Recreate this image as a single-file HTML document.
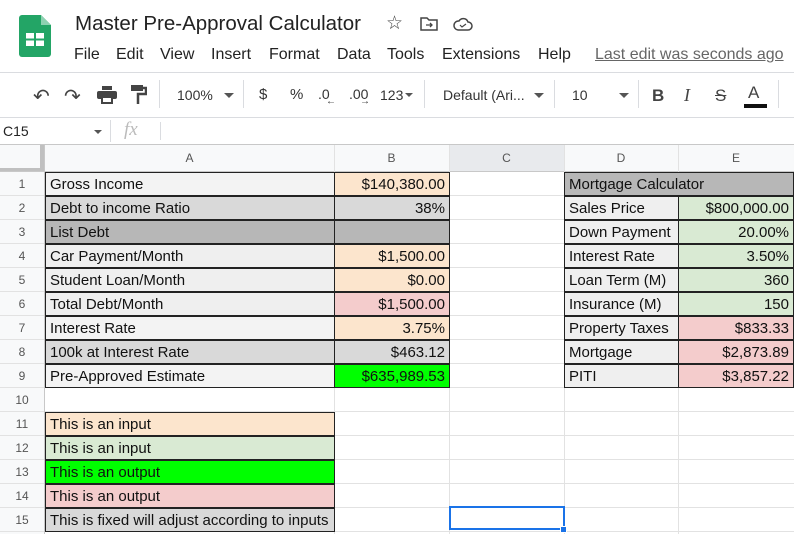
<!DOCTYPE html>
<html><head><meta charset="utf-8"><style>
*{margin:0;padding:0;box-sizing:border-box}
body{width:794px;height:534px;overflow:hidden;background:#fff;font-family:"Liberation Sans",Arial,sans-serif;position:relative;color:#202124}
.a{position:absolute}
.t{font-size:15px;white-space:nowrap}
.m{position:absolute;top:46px;font-size:16px;color:#222;white-space:nowrap}
.c{position:absolute;height:24px;font-size:15px;line-height:23px;padding:0 4px;white-space:nowrap;color:#111}
.r{text-align:right}
.bd{border:1px solid #222}
.hl{position:absolute;left:0;width:794px;height:1px;background:#e2e2e2}
.vl{position:absolute;top:145px;width:1px;height:389px;background:#e2e2e2}
.rn{position:absolute;left:0;width:44px;text-align:center;font-size:12px;color:#555;line-height:24px}
.ch{position:absolute;top:145px;height:27px;text-align:center;font-size:12px;color:#555;line-height:27px}
</style></head><body>
<svg class="a" style="left:19px;top:15px" width="32" height="42" viewBox="0 0 32 42"><path d="M3 0h19l10 10v29a3 3 0 0 1-3 3H3a3 3 0 0 1-3-3V3a3 3 0 0 1 3-3z" fill="#23a566"/><path d="M22 0v10h10z" fill="#8ed1b1"/><rect x="7" y="18" width="18" height="13" fill="#fff"/><rect x="15" y="18" width="2" height="13" fill="#23a566"/><rect x="7" y="23.5" width="18" height="2" fill="#23a566"/></svg>
<div class="a" style="left:75px;top:12px;font-size:20.5px;color:#222">Master Pre-Approval Calculator</div>
<div class="a" style="left:386px;top:12px;font-size:19px;color:#444">☆</div>
<svg class="a" style="left:420px;top:17px" width="18" height="14" viewBox="0 0 18 14"><path d="M1 1h6l2 2h8v10H1z" fill="none" stroke="#444" stroke-width="1.5"/><path d="M6 8h6M10 6l2 2-2 2" fill="none" stroke="#444" stroke-width="1.3"/></svg>
<svg class="a" style="left:453px;top:17px" width="20" height="14" viewBox="0 0 20 14"><path d="M5 13h10a4 4 0 0 0 0-8 5 5 0 0 0-9-1 4.5 4.5 0 0 0-1 9z" fill="none" stroke="#444" stroke-width="1.5"/><path d="M7 8l2 2 4-3" fill="none" stroke="#444" stroke-width="1.2"/></svg>
<div class="m" style="left:74px">File</div>
<div class="m" style="left:116px">Edit</div>
<div class="m" style="left:160px">View</div>
<div class="m" style="left:211px">Insert</div>
<div class="m" style="left:269px">Format</div>
<div class="m" style="left:337px">Data</div>
<div class="m" style="left:387px">Tools</div>
<div class="m" style="left:442px">Extensions</div>
<div class="m" style="left:538px">Help</div>
<div class="a t" style="left:595px;top:46px;font-size:16px;color:#666;text-decoration:underline">Last edit was seconds ago</div>
<div class="a" style="left:0;top:72px;width:794px;height:1px;background:#dadce0"></div>
<div class="a" style="left:33px;top:84px;font-size:20px;color:#444">↶</div>
<div class="a" style="left:64px;top:84px;font-size:20px;color:#444">↷</div>
<svg class="a" style="left:97px;top:86px" width="20" height="18" viewBox="0 0 20 18"><rect x="5" y="0" width="10" height="4" fill="#444"/><rect x="0" y="5" width="20" height="8" rx="2" fill="#444"/><rect x="5" y="11" width="10" height="6" fill="#fff" stroke="#444" stroke-width="2"/></svg>
<svg class="a" style="left:131px;top:85px" width="16" height="20" viewBox="0 0 16 20"><rect x="0" y="0" width="12" height="6" fill="#444"/><path d="M12 3h3v6H7v10" fill="none" stroke="#444" stroke-width="2.5"/></svg>
<div class="a" style="left:159px;top:80px;width:1px;height:28px;background:#dadce0"></div>
<div class="a t" style="left:177px;top:87px;font-size:14px;color:#333">100%</div>
<div class="a" style="left:224px;top:93px;border:5px solid transparent;border-top-color:#555"></div>
<div class="a" style="left:243px;top:80px;width:1px;height:28px;background:#dadce0"></div>
<div class="a t" style="left:259px;top:86px;font-size:15px;color:#333">$</div>
<div class="a t" style="left:290px;top:86px;font-size:15px;color:#333">%</div>
<div class="a t" style="left:318px;top:86px;font-size:14px;color:#333">.0</div>
<div class="a t" style="left:326px;top:96px;font-size:10px;color:#333">←</div>
<div class="a t" style="left:349px;top:86px;font-size:14px;color:#333">.00</div>
<div class="a t" style="left:360px;top:96px;font-size:10px;color:#333">→</div>
<div class="a t" style="left:380px;top:87px;font-size:14px;color:#333">123</div>
<div class="a" style="left:405px;top:93px;border:4px solid transparent;border-top-color:#555"></div>
<div class="a" style="left:424px;top:80px;width:1px;height:28px;background:#dadce0"></div>
<div class="a t" style="left:443px;top:87px;font-size:14px;color:#333">Default (Ari...</div>
<div class="a" style="left:534px;top:93px;border:5px solid transparent;border-top-color:#555"></div>
<div class="a" style="left:554px;top:80px;width:1px;height:28px;background:#dadce0"></div>
<div class="a t" style="left:572px;top:87px;font-size:14px;color:#333">10</div>
<div class="a" style="left:619px;top:93px;border:5px solid transparent;border-top-color:#555"></div>
<div class="a" style="left:638px;top:80px;width:1px;height:28px;background:#dadce0"></div>
<div class="a t" style="left:652px;top:86px;font-size:17px;font-weight:bold;color:#444">B</div>
<div class="a t" style="left:684px;top:85px;font-size:18px;font-style:italic;color:#444;font-family:'Liberation Serif',serif">I</div>
<div class="a t" style="left:715px;top:86px;font-size:17px;color:#444;text-decoration:line-through">S</div>
<div class="a t" style="left:748px;top:83px;font-size:17px;color:#444">A</div>
<div class="a" style="left:744px;top:104px;width:23px;height:4px;background:#111"></div>
<div class="a" style="left:778px;top:80px;width:1px;height:28px;background:#dadce0"></div>
<div class="a" style="left:0;top:117px;width:794px;height:1px;background:#dadce0"></div>
<div class="a t" style="left:3px;top:123px;font-size:14px;color:#222">C15</div>
<div class="a" style="left:94px;top:130px;border:4px solid transparent;border-top-color:#555"></div>
<div class="a" style="left:110px;top:120px;width:1px;height:22px;background:#dadce0"></div>
<div class="a" style="left:124px;top:119px;font-size:19px;font-style:italic;color:#bbb;font-family:'Liberation Serif',serif">fx</div>
<div class="a" style="left:160px;top:122px;width:1px;height:18px;background:#dadce0"></div>
<div class="a" style="left:0;top:144px;width:794px;height:1px;background:#c8c8c8"></div>
<div class="a" style="left:0;top:145px;width:794px;height:27px;background:#f8f9fa"></div>
<div class="a" style="left:0;top:172px;width:45px;height:362px;background:#f8f9fa"></div>
<div class="a" style="left:449px;top:145px;width:115px;height:27px;background:#e8eaed"></div>
<div class="a" style="left:40px;top:145px;width:5px;height:27px;background:#c0c0c0"></div>
<div class="a" style="left:0;top:168px;width:45px;height:4px;background:#c0c0c0"></div>
<div class="ch" style="left:45px;width:289px">A</div>
<div class="ch" style="left:334px;width:115px">B</div>
<div class="ch" style="left:449px;width:115px">C</div>
<div class="ch" style="left:564px;width:114px">D</div>
<div class="ch" style="left:678px;width:116px">E</div>
<div class="hl" style="top:171px;background:#c8c8c8"></div>
<div class="hl" style="top:195px"></div><div class="hl" style="top:219px"></div><div class="hl" style="top:243px"></div><div class="hl" style="top:267px"></div><div class="hl" style="top:291px"></div><div class="hl" style="top:315px"></div><div class="hl" style="top:339px"></div><div class="hl" style="top:363px"></div><div class="hl" style="top:387px"></div><div class="hl" style="top:411px"></div><div class="hl" style="top:435px"></div><div class="hl" style="top:459px"></div><div class="hl" style="top:483px"></div><div class="hl" style="top:507px"></div><div class="hl" style="top:531px"></div>
<div class="vl" style="left:44px;background:#c8c8c8"></div><div class="vl" style="left:334px"></div><div class="vl" style="left:449px"></div><div class="vl" style="left:564px"></div><div class="vl" style="left:678px"></div>
<div class="rn" style="top:172px">1</div><div class="rn" style="top:196px">2</div><div class="rn" style="top:220px">3</div><div class="rn" style="top:244px">4</div><div class="rn" style="top:268px">5</div><div class="rn" style="top:292px">6</div><div class="rn" style="top:316px">7</div><div class="rn" style="top:340px">8</div><div class="rn" style="top:364px">9</div><div class="rn" style="top:388px">10</div><div class="rn" style="top:412px">11</div><div class="rn" style="top:436px">12</div><div class="rn" style="top:460px">13</div><div class="rn" style="top:484px">14</div><div class="rn" style="top:508px">15</div>
<div class="c bd" style="left:45px;top:172px;width:290px;background:#f3f3f3">Gross Income</div>
<div class="c bd r" style="left:334px;top:172px;width:116px;background:#fce5cd">$140,380.00</div>
<div class="c bd" style="left:45px;top:196px;width:290px;background:#d9d9d9">Debt to income Ratio</div>
<div class="c bd r" style="left:334px;top:196px;width:116px;background:#d9d9d9">38%</div>
<div class="c bd" style="left:45px;top:220px;width:290px;background:#b7b7b7">List Debt</div>
<div class="c bd r" style="left:334px;top:220px;width:116px;background:#b7b7b7"></div>
<div class="c bd" style="left:45px;top:244px;width:290px;background:#efefef">Car Payment/Month</div>
<div class="c bd r" style="left:334px;top:244px;width:116px;background:#fce5cd">$1,500.00</div>
<div class="c bd" style="left:45px;top:268px;width:290px;background:#efefef">Student Loan/Month</div>
<div class="c bd r" style="left:334px;top:268px;width:116px;background:#fce5cd">$0.00</div>
<div class="c bd" style="left:45px;top:292px;width:290px;background:#efefef">Total Debt/Month</div>
<div class="c bd r" style="left:334px;top:292px;width:116px;background:#f4cccc">$1,500.00</div>
<div class="c bd" style="left:45px;top:316px;width:290px;background:#f3f3f3">Interest Rate</div>
<div class="c bd r" style="left:334px;top:316px;width:116px;background:#fce5cd">3.75%</div>
<div class="c bd" style="left:45px;top:340px;width:290px;background:#d9d9d9">100k at Interest Rate</div>
<div class="c bd r" style="left:334px;top:340px;width:116px;background:#d9d9d9">$463.12</div>
<div class="c bd" style="left:45px;top:364px;width:290px;background:#f3f3f3">Pre-Approved Estimate</div>
<div class="c bd r" style="left:334px;top:364px;width:116px;background:#00ff00">$635,989.53</div>
<div class="c bd" style="left:45px;top:412px;width:290px;background:#fce5cd">This is an input</div>
<div class="c bd" style="left:45px;top:436px;width:290px;background:#d9ead3">This is an input</div>
<div class="c bd" style="left:45px;top:460px;width:290px;background:#00ff00">This is an output</div>
<div class="c bd" style="left:45px;top:484px;width:290px;background:#f4cccc">This is an output</div>
<div class="c bd" style="left:45px;top:508px;width:290px;background:#d9d9d9">This is fixed will adjust according to inputs</div>
<div class="c bd" style="left:564px;top:172px;width:230px;background:#b7b7b7">Mortgage Calculator</div>
<div class="c bd" style="left:564px;top:196px;width:115px;background:#efefef">Sales Price</div>
<div class="c bd r" style="left:678px;top:196px;width:116px;background:#d9ead3">$800,000.00</div>
<div class="c bd" style="left:564px;top:220px;width:115px;background:#efefef">Down Payment</div>
<div class="c bd r" style="left:678px;top:220px;width:116px;background:#d9ead3">20.00%</div>
<div class="c bd" style="left:564px;top:244px;width:115px;background:#efefef">Interest Rate</div>
<div class="c bd r" style="left:678px;top:244px;width:116px;background:#d9ead3">3.50%</div>
<div class="c bd" style="left:564px;top:268px;width:115px;background:#efefef">Loan Term (M)</div>
<div class="c bd r" style="left:678px;top:268px;width:116px;background:#d9ead3">360</div>
<div class="c bd" style="left:564px;top:292px;width:115px;background:#efefef">Insurance (M)</div>
<div class="c bd r" style="left:678px;top:292px;width:116px;background:#d9ead3">150</div>
<div class="c bd" style="left:564px;top:316px;width:115px;background:#efefef">Property Taxes</div>
<div class="c bd r" style="left:678px;top:316px;width:116px;background:#f4cccc">$833.33</div>
<div class="c bd" style="left:564px;top:340px;width:115px;background:#efefef">Mortgage</div>
<div class="c bd r" style="left:678px;top:340px;width:116px;background:#f4cccc">$2,873.89</div>
<div class="c bd" style="left:564px;top:364px;width:115px;background:#efefef">PITI</div>
<div class="c bd r" style="left:678px;top:364px;width:116px;background:#f4cccc">$3,857.22</div>
<div class="a" style="left:449px;top:506px;width:116px;height:24px;border:2px solid #1a73e8"></div>
<div class="a" style="left:560px;top:526px;width:7px;height:7px;background:#1a73e8;border:1px solid #fff"></div>
</body></html>
